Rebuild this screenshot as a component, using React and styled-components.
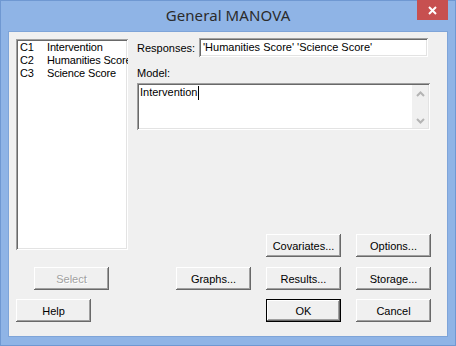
import styled, { createGlobalStyle } from "styled-components";

const GlobalStyle = createGlobalStyle`
  html, body {
    margin: 0;
    padding: 0;
    background: #8fb4e6;
  }
  * {
    box-sizing: border-box;
  }
`

const Window = styled.div`
  width: 456px;
  height: 346px;
  display: flex;
  flex-direction: column;
  background: #8fb4e6;
  border: 1px solid #6f98d2;
  padding: 0 7px 8px 7px;
  font-family: "Liberation Sans", Arial, sans-serif;
  font-size: 11px;
  color: #000;
`

const TitleBar = styled.div`
  height: 30px;
  display: grid;
  grid-template-columns: 1fr auto 1fr;
  align-items: start;
`

const Title = styled.div`
  grid-column: 2;
  font-family: "Noto Sans", "Open Sans", sans-serif;
  font-size: 15px;
  color: #2b2b2b;
  line-height: 29px;
  letter-spacing: 0.1px;
`

const CloseButton = styled.div`
  grid-column: 3;
  justify-self: end;
  width: 31px;
  height: 20px;
  background: #c75050;
  display: flex;
  align-items: center;
  justify-content: center;
  margin-top: -1px;
`

const Content = styled.div`
  flex: 1;
  background: #f0f0f0;
  border: 1px solid #7ea4d8;
  display: flex;
  padding: 6px 16px 14px 7px;
`

const LeftCol = styled.div`
  width: 112px;
  display: flex;
  flex-direction: column;
`

const RightCol = styled.div`
  flex: 1;
  margin-left: 9px;
  display: flex;
  flex-direction: column;
`

const sunken = `
  background: #fff;
  box-shadow: inset 1px 1px #a0a0a0, inset -1px -1px #fff,
    inset 2px 2px #696969, inset -2px -2px #e3e3e3;
`

const ListBox = styled.div`
  ${sunken}
  margin-top: 1px;
  height: 211px;
  padding: 2px 0 0 4px;
  overflow: hidden;
  white-space: nowrap;
  letter-spacing: -0.15px;
`

const ListRow = styled.div`
  display: flex;
  height: 13px;
  line-height: 13px;
`

const ColId = styled.span`
  width: 27px;
  flex: none;
`

const Button = styled.div`
  width: 75px;
  height: 23px;
  display: flex;
  align-items: center;
  justify-content: center;
  background: #f0f0f0;
  margin-left: ${(p) => p.$indent || 0}px;
  margin-top: ${(p) => p.$top || 0}px;
  color: ${(p) => (p.$disabled ? "#a0a0a0" : "#000")};
  text-shadow: ${(p) => (p.$disabled ? "1px 1px #fff" : "none")};
  box-shadow: ${(p) =>
    p.$default
      ? "inset 1px 1px #000, inset -1px -1px #000, inset -2px -2px #696969, inset 2px 2px #fff, inset -3px -3px #a0a0a0"
      : "inset -1px -1px #696969, inset 1px 1px #fff, inset -2px -2px #a0a0a0, inset 2px 2px #f0f0f0"};
`

const FieldRow = styled.div`
  display: grid;
  grid-template-columns: 62px 229px;
  align-items: center;
  height: 19px;
`

const TextBox = styled.div`
  ${sunken}
  height: 19px;
  padding: 0 4px;
  line-height: 19px;
  white-space: nowrap;
  overflow: hidden;
`

const Label = styled.div`
  margin-top: 10px;
  line-height: 13px;
`

const ModelArea = styled.div`
  ${sunken}
  margin-top: 3px;
  width: 293px;
  height: 47px;
  display: flex;
  padding: 2px 2px 2px 3px;
`

const AreaText = styled.div`
  flex: 1;
  line-height: 15px;
  display: flex;
  align-items: flex-start;
`

const Caret = styled.span`
  display: inline-block;
  width: 1px;
  height: 14px;
  background: #000;
  margin-left: 1px;
  margin-top: 1px;
`

const ScrollBar = styled.div`
  width: 16px;
  background: #f0f0f0;
  display: flex;
  flex-direction: column;
  justify-content: space-between;
  align-items: center;
  padding: 6px 0 4px;
`

const ButtonStack = styled.div`
  margin-top: auto;
  display: flex;
  flex-direction: column;
`

const ButtonRow = styled.div`
  display: flex;
  justify-content: flex-end;
  gap: 15px;
  margin-top: ${(p) => p.$top || 0}px;
`

const Chevron = ({ up }) => (
  <svg width="9" height="6" viewBox="0 0 9 6">
    <path
      d={up ? "M1 5 L4.5 1.5 L8 5" : "M1 1 L4.5 4.5 L8 1"}
      fill="none"
      stroke="#b4b4b4"
      strokeWidth="2"
    />
  </svg>
)

const columns = [
  ["C1", "Intervention"],
  ["C2", "Humanities Score"],
  ["C3", "Science Score"],
]

function App() {
  return (
    <>
      <GlobalStyle />
      <Window>
        <TitleBar>
          <Title>General MANOVA</Title>
          <CloseButton>
            <svg width="9" height="9" viewBox="0 0 9 9">
              <path d="M1 1 L8 8 M8 1 L1 8" stroke="#fff" strokeWidth="2" />
            </svg>
          </CloseButton>
        </TitleBar>
        <Content>
          <LeftCol>
            <ListBox>
              {columns.map(([id, name]) => (
                <ListRow key={id}>
                  <ColId>{id}</ColId>
                  <span>{name}</span>
                </ListRow>
              ))}
            </ListBox>
            <Button $disabled $indent={18} $top={17}>Select</Button>
            <Button $top={9}>Help</Button>
          </LeftCol>
          <RightCol>
            <FieldRow>
              <span>Responses:</span>
              <TextBox>'Humanities Score' 'Science Score'</TextBox>
            </FieldRow>
            <Label>Model:</Label>
            <ModelArea>
              <AreaText>
                Intervention<Caret />
              </AreaText>
              <ScrollBar>
                <Chevron up />
                <Chevron />
              </ScrollBar>
            </ModelArea>
            <ButtonStack>
              <ButtonRow>
                <Button>Covariates...</Button>
                <Button>Options...</Button>
              </ButtonRow>
              <ButtonRow $top={10}>
                <Button>Graphs...</Button>
                <Button>Results...</Button>
                <Button>Storage...</Button>
              </ButtonRow>
              <ButtonRow $top={9}>
                <Button $default>OK</Button>
                <Button>Cancel</Button>
              </ButtonRow>
            </ButtonStack>
          </RightCol>
        </Content>
      </Window>
    </>
  )
}

export default App
